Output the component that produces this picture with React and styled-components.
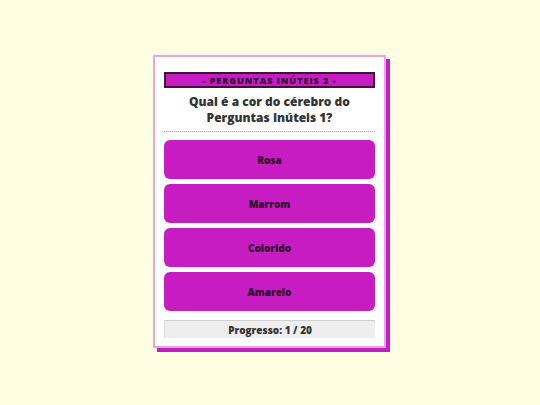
import styled, { createGlobalStyle } from 'styled-components';

const GlobalStyle = createGlobalStyle`
  html, body {
    margin: 0;
    padding: 0;
    background: #fffde2;
    font-family: "Open Sans", "Lato", sans-serif;
  }
`;

// Page frame
const Page = styled.div`
  width: 540px;
  height: 405px;
  display: flex;
  justify-content: center;
  padding-top: 55px;
  padding-right: 1px;
  box-sizing: border-box;
`;

const Card = styled.div`
  width: 233px;
  height: 293px;
  box-sizing: border-box;
  background: #ffffff;
  border: 2px solid #e9a3e8;
  box-shadow: 4px 4px 0 #c61cc1;
  padding: 15px 9px 7px 9px;
  display: flex;
  flex-direction: column;
`;

const TitleBar = styled.div`
  height: 16px;
  box-sizing: border-box;
  background: #c61cc1;
  border: 2px solid #3b1538;
  display: flex;
  align-items: center;
  justify-content: center;
  font-size: 9px;
  font-weight: 800;
  letter-spacing: 1px;
  color: #2a0a28;
  text-transform: uppercase;
`;

const Question = styled.h2`
  margin: 0;
  padding: 6px 0 5px;
  text-align: center;
  font-size: 12px;
  line-height: 16px;
  font-weight: 800;
  color: #333333;
  border-bottom: 1px dotted #d98ad8;
`;

const Options = styled.div`
  display: flex;
  flex-direction: column;
  gap: 5px;
  margin-top: 8px;
`;

const OptionButton = styled.button`
  height: 39px;
  border: none;
  border-radius: 6px;
  background: #c61cc1;
  color: #2a0a28;
  font-family: inherit;
  font-size: 10px;
  font-weight: 800;
  cursor: pointer;
`;

const Progress = styled.div`
  margin-top: 9px;
  height: 18px;
  box-sizing: border-box;
  background: #eeeeee;
  border-top: 1px solid #cfcfcf;
  border-left: 1px solid #dddddd;
  display: flex;
  align-items: center;
  justify-content: center;
  font-size: 10px;
  font-weight: 800;
  color: #333333;
`;

const answers = ['Rosa', 'Marrom', 'Colorido', 'Amarelo'];

export default function App() {
  return (
    <Page>
      <GlobalStyle />
      <Card>
        <TitleBar>- Perguntas Inúteis 2 -</TitleBar>
        <Question>
          Qual é a cor do cérebro do
          <br />
          Perguntas Inúteis 1?
        </Question>
        <Options>
          {answers.map((a) => (
            <OptionButton key={a}>{a}</OptionButton>
          ))}
        </Options>
        <Progress>Progresso: 1 / 20</Progress>
      </Card>
    </Page>
  );
}
